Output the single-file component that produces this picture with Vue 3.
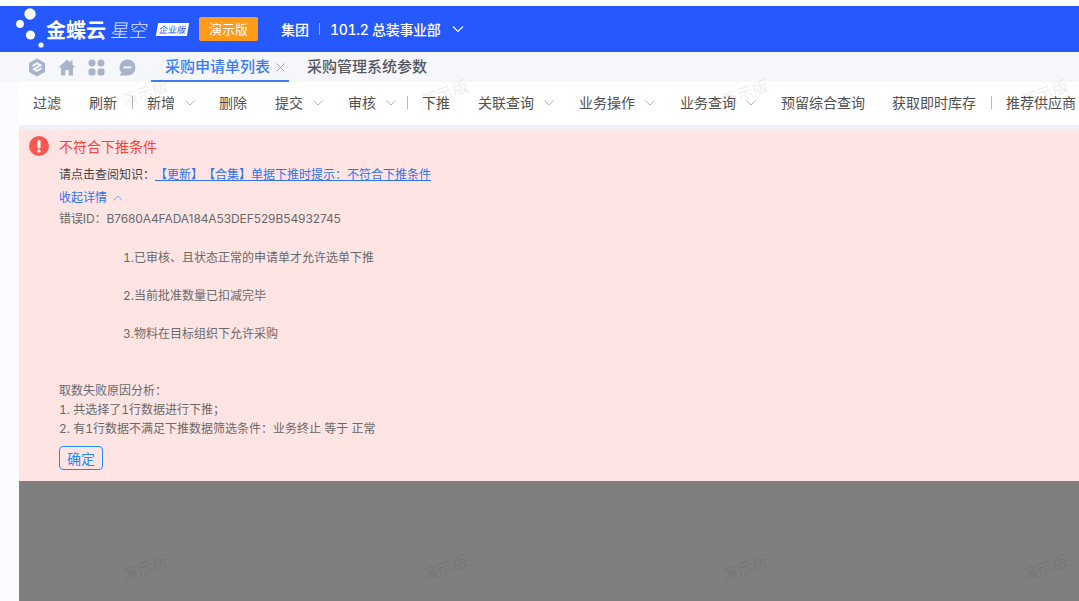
<script setup>
const toolbar = [
  { label: '过滤', width: 56 },
  { label: '刷新', width: 58, sep: true },
  { label: '新增', width: 72, arrow: true },
  { label: '删除', width: 56 },
  { label: '提交', width: 73, arrow: true },
  { label: '审核', width: 74, arrow: true, sep: true },
  { label: '下推', width: 56 },
  { label: '关联查询', width: 101, arrow: true },
  { label: '业务操作', width: 101, arrow: true },
  { label: '业务查询', width: 101, arrow: true },
  { label: '预留综合查询', width: 111 },
  { label: '获取即时库存', width: 114, sep: true },
  { label: '推荐供应商', width: 80 },
]

const marks = [
  { x: 121, y: 81 }, { x: 421, y: 81 }, { x: 721, y: 81 }, { x: 1021, y: 81 },
  { x: 121, y: 556 }, { x: 421, y: 556 }, { x: 721, y: 556 }, { x: 1021, y: 556 },
]
</script>

<template>
  <div class="page">
    <header class="topbar">
      <div class="logo">
        <svg class="logo-dots" width="32" height="44" viewBox="0 0 32 44">
          <circle cx="16" cy="7" r="5.700" fill="#fff" />
          <circle cx="6" cy="17" r="3.900" fill="#fff" />
          <circle cx="16.500" cy="28" r="4.600" fill="#fff" />
          <circle cx="27" cy="38" r="2.600" fill="#fff" />
        </svg>
        <span class="logo-name">金蝶云</span>
        <span class="logo-sub">星空</span>
        <span class="logo-tag">企业版</span>
      </div>
      <span class="demo-btn">演示版</span>
      <span class="org">集团</span>
      <span class="org-sep"></span>
      <span class="org org-name">101.2 总装事业部</span>
      <svg class="org-arrow" width="12" height="8" viewBox="0 0 12 8">
        <path d="M1 1.500l5 5 5-5" fill="none" stroke="#fff" stroke-width="1.100" />
      </svg>
    </header>

    <nav class="tabs">
      <div class="tab-icons">
        <svg width="18" height="19" viewBox="0 0 18 19">
          <path d="M9 0.500l8 4.500v9l-8 4.500-8-4.500v-9z" fill="#a9b4cb" />
          <path d="M4.500 8L9 5.400l3.500 1.800L6 11l3 1.800 4.500-2.600" fill="none" stroke="#f5f7fb" stroke-width="1.900" />
        </svg>
        <svg width="18" height="17" viewBox="0 0 18 17">
          <path d="M9 0.500L0.500 8.500H3V16.500H7.300V11H10.700V16.500H15V8.500H17.500L14.500 5.700V1.500H12.500V3.800z" fill="#a9b4cb" />
        </svg>
        <svg width="17" height="17" viewBox="0 0 17 17">
          <rect x="0.500" y="0.500" width="7" height="7" rx="3.500" fill="#a9b4cb" />
          <rect x="9.500" y="0.500" width="7" height="7" rx="3.500" fill="#a9b4cb" />
          <rect x="0.500" y="9.500" width="7" height="7" rx="2.500" fill="#a9b4cb" />
          <rect x="9.500" y="9.500" width="7" height="7" rx="2.500" fill="#a9b4cb" />
        </svg>
        <svg class="icon-msg" width="17" height="17" viewBox="0 0 17 17">
          <path d="M8.500 0.500a8 8 0 1 1 0 16H0.800l1.500-3A8 8 0 0 1 8.500 0.500z" fill="#a9b4cb" />
          <rect x="4.500" y="7.500" width="8" height="1.800" fill="#f5f7fb" />
        </svg>
      </div>
      <div class="tab tab-active">
        采购申请单列表<svg class="tab-close" width="9" height="9" viewBox="0 0 9 9">
          <path d="M0.500 0.500l8 8M8.500 0.500l-8 8" stroke="#8d93a0" stroke-width="0.800" />
        </svg>
      </div>
      <div class="tab">采购管理系统参数</div>
    </nav>

    <div class="body">
      <aside class="side"></aside>
      <main class="main">
        <div class="toolbar">
          <div
            v-for="item in toolbar"
            :key="item.label"
            class="tool"
            :style="{ width: item.width + 'px' }"
          >
            <span>{{ item.label }}</span>
            <svg v-if="item.arrow" class="tool-arrow" width="10" height="6" viewBox="0 0 10 6">
              <path d="M0.500 0.500L5 5l4.500-4.500" fill="none" stroke="#a8adb8" stroke-width="0.900" />
            </svg>
            <i v-if="item.sep" class="tool-sep"></i>
          </div>
        </div>

        <div class="gap"></div>

        <section class="alert">
          <div class="alert-title">
            <svg width="20" height="20" viewBox="0 0 20 20">
              <circle cx="10" cy="10" r="10" fill="#f9584f" />
              <rect x="8.500" y="4" width="3" height="8.500" rx="1.200" fill="#fff" />
              <circle cx="10" cy="15" r="1.600" fill="#fff" />
            </svg>
            <span>不符合下推条件</span>
          </div>
          <div class="alert-body">
            <p class="line-knowledge">
              请点击查阅知识：<a href="#" @click.prevent>【更新】【合集】单据下推时提示：不符合下推条件</a>
            </p>
            <p class="line-toggle">
              收起详情
              <svg width="10" height="6" viewBox="0 0 10 6">
                <path d="M0.500 5.500L5 1l4.500 4.500" fill="none" stroke="#6ea0f5" stroke-width="0.900" />
              </svg>
            </p>
            <p class="line-id">错误ID：B7680A4FADA184A53DEF529B54932745</p>
            <p class="cond first">1.已审核、且状态正常的申请单才允许选单下推</p>
            <p class="cond">2.当前批准数量已扣减完毕</p>
            <p class="cond">3.物料在目标组织下允许采购</p>
            <p class="reason">取数失败原因分析：</p>
            <p>1. 共选择了1行数据进行下推；</p>
            <p>2. 有1行数据不满足下推数据筛选条件：业务终止 等于 正常</p>
            <button class="ok-btn" type="button">确定</button>
          </div>
        </section>

        <div class="mask"></div>
      </main>
    </div>

    <span
      v-for="m in marks"
      :key="m.x + '-' + m.y"
      class="watermark"
      :style="{ left: m.x + 'px', top: m.y + 'px' }"
    >演示版</span>
  </div>
</template>

<style scoped>
.page {
  position: relative;
  width: 1079px;
  height: 601px;
  overflow: hidden;
  background: #fff;
  font-family: Inter, "Noto Sans CJK SC", "Liberation Sans", sans-serif;
  font-variant-numeric: tabular-nums;
  text-spacing-trim: space-all;
  color: #4a4a4a;
  padding-top: 6px;
  box-sizing: border-box;
  display: flex;
  flex-direction: column;
}

.topbar {
  height: 46px;
  background: #2558ff;
  display: flex;
  align-items: center;
  color: #fff;
  flex: none;
}

.logo {
  display: flex;
  align-items: center;
  width: 199px;
  flex: none;
}

.logo-dots {
  margin-left: 14px;
  flex: none;
}

.logo-name {
  font-size: 20px;
  font-weight: 700;
}

.logo-sub {
  margin-left: 5px;
  font-size: 18.500px;
  font-weight: 300;
  opacity: 0.85;
  transform: skewX(-8deg);
}

.logo-tag {
  margin-left: 9px;
  background: #fff;
  color: #2558ff;
  font-size: 9px;
  line-height: 13px;
  padding: 0 2px;
  transform: skewX(-10deg);
  white-space: nowrap;
}

.demo-btn {
  width: 59px;
  height: 24px;
  line-height: 24px;
  text-align: center;
  background: #ff9a1a;
  border-radius: 2px;
  font-size: 13px;
  flex: none;
}

.org {
  font-size: 14px;
  font-weight: 500;
}

.org-name {
  letter-spacing: -0.300px;
}

.demo-btn + .org {
  margin-left: 23px;
}

.org-sep {
  width: 1px;
  height: 12px;
  background: rgba(255, 255, 255, 0.5);
  margin: 0 10px;
}

.org-arrow {
  margin-left: 11px;
}

.tabs {
  height: 30px;
  background: #f5f7fb;
  display: flex;
  align-items: center;
  flex: none;
}

.tab-icons {
  display: flex;
  align-items: center;
  gap: 12px;
  margin-left: 28px;
  width: 123px;
  flex: none;
}

.icon-msg {
  margin-left: 2px;
}

.tab {
  font-size: 15px;
  font-weight: 500;
  color: #55585f;
  height: 30px;
  line-height: 30px;
  box-sizing: border-box;
  white-space: nowrap;
}

.tab-active {
  color: #3d7cf5;
  width: 138px;
  padding-left: 14px;
  border-bottom: 2px solid #3d7cf5;
  margin-right: 18px;
}

.tab-close {
  margin-left: 6px;
}

.body {
  flex: 1;
  display: flex;
  min-height: 0;
}

.side {
  width: 19px;
  background: #fafbff;
  flex: none;
}

.main {
  flex: 1;
  min-width: 0;
  display: flex;
  flex-direction: column;
  background: #7f7f7f;
}

.toolbar {
  height: 43px;
  background: #fff;
  display: flex;
  align-items: center;
  padding: 0 0 4px 14px;
  box-sizing: border-box;
  flex: none;
  white-space: nowrap;
  overflow: hidden;
}

.tool {
  display: flex;
  align-items: center;
  font-size: 14px;
  color: #505050;
  flex: none;
  position: relative;
}

.tool-arrow {
  margin: 3px 0 0 10px;
}

.tool-sep {
  position: absolute;
  right: 14px;
  top: 50%;
  margin-top: -6px;
  width: 1px;
  height: 13px;
  background: #b4b7bd;
}

.gap {
  height: 5px;
  background: #eef1f8;
  flex: none;
}

.alert {
  height: 351px;
  background: #ffe4e4;
  box-sizing: border-box;
  padding: 6px 0 0 10px;
  flex: none;
}

.alert-title {
  display: flex;
  align-items: center;
  gap: 10px;
  font-size: 14px;
  color: #f9423a;
  height: 20px;
}

.alert-body {
  padding-left: 30px;
  font-size: 12px;
  line-height: 19px;
  color: #6a6a6a;
}

.alert-body p {
  margin: 0;
}

.alert-body .line-knowledge {
  margin-top: 9px;
  color: #444;
}

.line-knowledge a {
  color: #2f73f0;
  text-decoration: underline;
}

.alert-body .line-toggle {
  margin-top: 4px;
  color: #2f73f0;
}

.line-toggle svg {
  margin-left: 3px;
  vertical-align: 1px;
}

.alert-body .line-id {
  margin-top: 2px;
  font-variant-numeric: normal;
  letter-spacing: -0.100px;
}

.alert-body .cond {
  padding-left: 64px;
  margin-top: 19px;
}

.alert-body .cond.first {
  margin-top: 20px;
}

.alert-body .reason {
  margin-top: 38px;
}

.ok-btn {
  display: block;
  margin-top: 8px;
  width: 44px;
  height: 24px;
  padding: 0;
  background: transparent;
  border: 1px solid #1a8cff;
  border-radius: 4px;
  color: #1a8cff;
  font-family: inherit;
  font-size: 14px;
}

.mask {
  flex: 1;
}

.watermark {
  position: absolute;
  font-size: 16px;
  line-height: 24px;
  color: rgba(0, 0, 0, 0.09);
  transform: rotate(-20deg);
  pointer-events: none;
  white-space: nowrap;
}
</style>
